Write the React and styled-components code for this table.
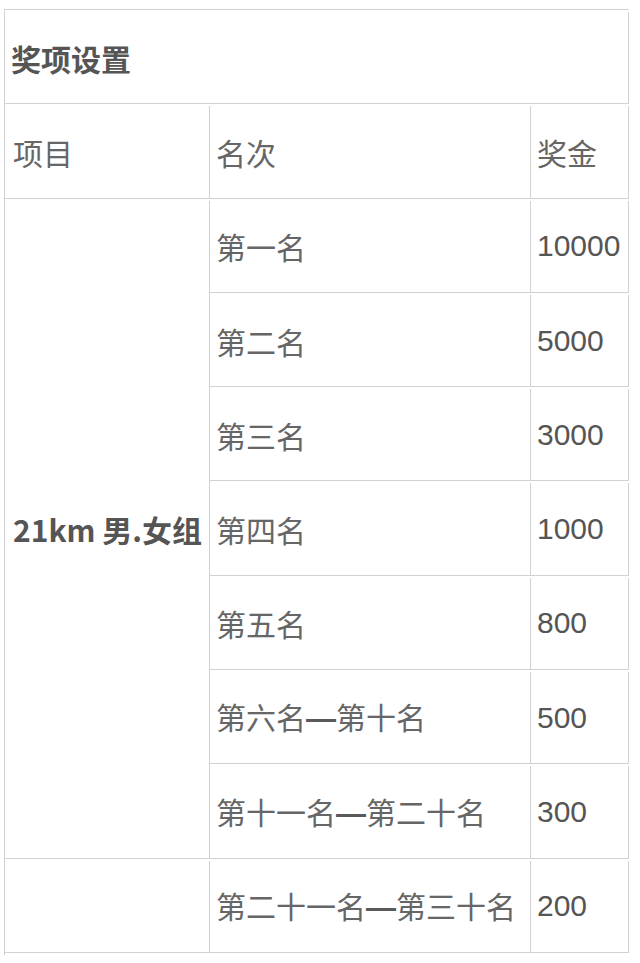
import React from 'react';
import styled, { createGlobalStyle } from 'styled-components';

const prizes = [
  { rank: ['第一名'], amount: '10000' },
  { rank: ['第二名'], amount: '5000' },
  { rank: ['第三名'], amount: '3000' },
  { rank: ['第四名'], amount: '1000' },
  { rank: ['第五名'], amount: '800' },
  { rank: ['第六名', '第十名'], amount: '500' },
  { rank: ['第十一名', '第二十名'], amount: '300' },
];

const Rank = ({ parts }) =>
  parts.length === 1 ? (
    parts[0]
  ) : (
    <>
      {parts[0]}
      <Dash>—</Dash>
      {parts[1]}
    </>
  );

export default function App() {
  return (
    <Page>
      <GlobalStyle />
      <Table>
        <colgroup>
          <col style={{ width: 205 }} />
          <col style={{ width: 321 }} />
          <col style={{ width: 98 }} />
        </colgroup>
        <tbody>
          <Row>
            <Cell colSpan={3} $bold>
              奖项设置
            </Cell>
          </Row>
          <Row>
            <Cell $first>项目</Cell>
            <Cell>名次</Cell>
            <Cell>奖金</Cell>
          </Row>
          {prizes.map((item, i) => (
            <Row key={item.amount}>
              {i === 0 && (
                <Cell rowSpan={prizes.length} $bold $first>
                  21km 男.女组
                </Cell>
              )}
              <Cell>
                <Rank parts={item.rank} />
              </Cell>
              <Cell $num>{item.amount}</Cell>
            </Row>
          ))}
          <Row>
            <Cell $first />
            <Cell>
              <Rank parts={['第二十一名', '第三十名']} />
            </Cell>
            <Cell $num>200</Cell>
          </Row>
        </tbody>
      </Table>
    </Page>
  );
}

const GlobalStyle = createGlobalStyle`
  body {
    margin: 0;
    background: #fff;
    font-family: "Liberation Sans", "Noto Sans CJK SC", sans-serif;
  }
`;

const Page = styled.div`
  padding: 10px 0 0 4px;
`;

const Table = styled.table`
  table-layout: fixed;
  width: 625px;
  border-collapse: separate;
  border-spacing: 0 2px;
  border-top: 1px solid #d2d2d2;
  border-left: 1px solid #d2d2d2;
  margin-top: -1px;
`;

const Row = styled.tr`
  height: 92.3px;
`;

const Cell = styled.td`
  box-sizing: border-box;
  padding: 0 0 0 ${p => (p.$first ? '8px' : '6px')};
  border-right: 1px solid #d2d2d2;
  border-bottom: 1px solid #d2d2d2;
  vertical-align: middle;
  white-space: nowrap;
  overflow: hidden;
  font-size: 30px;
  line-height: 36px;
  color: ${p => (p.$bold || p.$num ? '#555' : '#666')};
  font-weight: ${p => (p.$bold ? 700 : 400)};
  font-family: ${p =>
    p.$num ? '"Liberation Sans", sans-serif' : '"Noto Sans CJK SC", "Liberation Sans", sans-serif'};
`;

const Dash = styled.span`
  font-family: "Liberation Sans", sans-serif;
  font-weight: 700;
  color: #5a5a5a;
`;
